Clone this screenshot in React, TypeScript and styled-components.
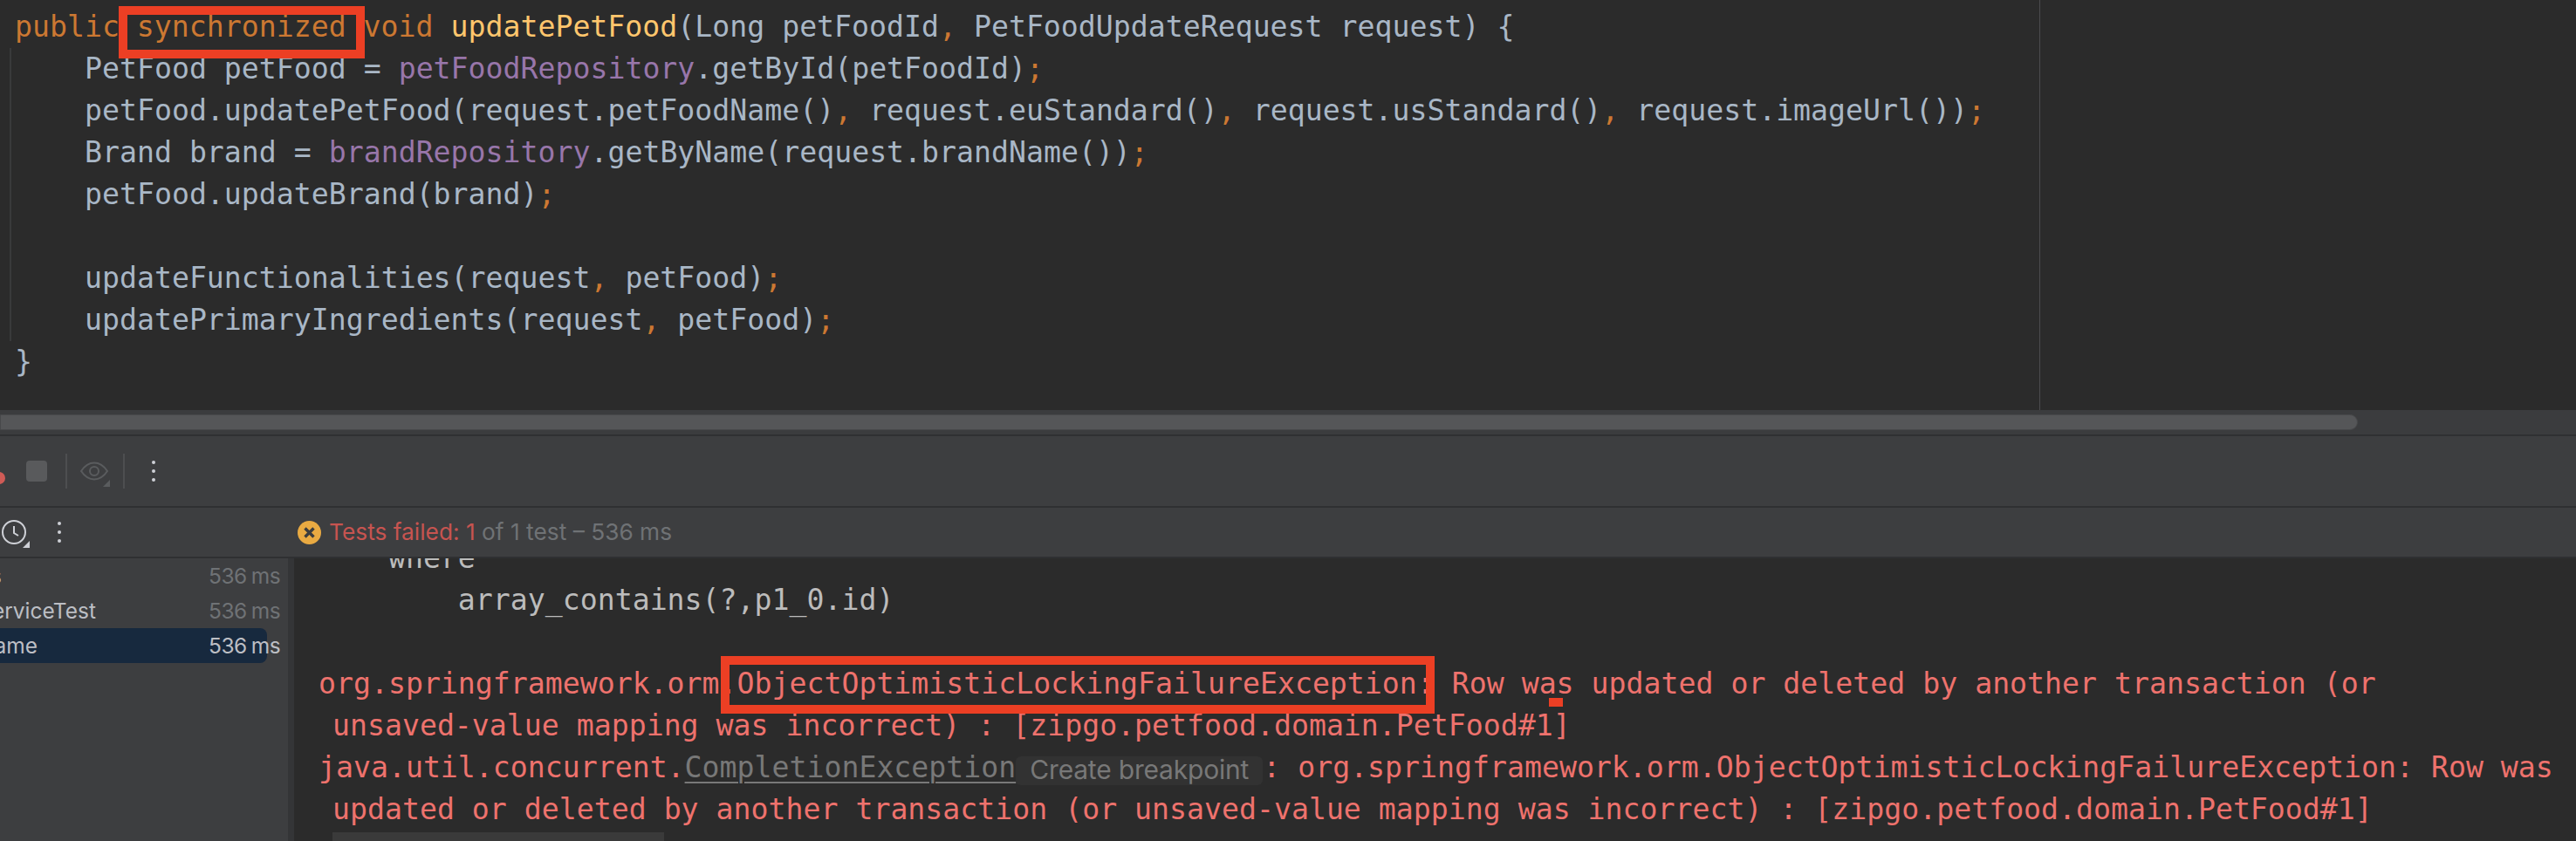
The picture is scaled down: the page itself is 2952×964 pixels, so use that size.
import React from "react";
import styled, { createGlobalStyle } from "styled-components";

const Global = createGlobalStyle`
  html, body { margin: 0; padding: 0; background: #2b2b2b; }
  * { box-sizing: border-box; }
`;

const mono = `"DejaVu Sans Mono", "Liberation Mono", monospace`;
const ui = `Inter, "Noto Sans", sans-serif`;

const Page = styled.div`
  position: relative;
  width: 2952px;
  height: 964px;
  overflow: hidden;
  display: flex;
  flex-direction: column;
  background: #2b2b2b;
`;

const Editor = styled.div`
  height: 470px;
  flex: none;
  display: flex;
  background: #2b2b2b;
`;
const CodeArea = styled.div`
  width: 2338px;
  padding: 7px 0 0 17px;
  border-right: 1px solid #4b4c4e;
  font: 33.2px/48px ${mono};
  color: #a9b7c6;
`;
const Line = styled.div`
  height: 48px;
  white-space: pre;
`;
const MethodBody = styled.div`
  margin-left: -6px;
  padding-left: 84px;
  border-left: 2px solid #393a3b;
`;
const Kw = styled.span`color: #cc7832;`;
const Fn = styled.span`color: #ffc66d;`;
const Field = styled.span`color: #9876aa;`;

const ScrollTrack = styled.div`
  height: 28px;
  flex: none;
  padding-top: 5px;
  background: #3b3c3e;
`;
const ScrollThumb = styled.div`
  width: 2702px;
  height: 18px;
  background: #555658;
  border: 1px solid #47484a;
  border-radius: 0 9px 9px 0;
`;
const Rule = styled.div`
  height: 2px;
  flex: none;
  background: #2f3032;
`;

const ActionBar = styled.div`
  position: relative;
  height: 80px;
  flex: none;
  display: flex;
  align-items: center;
  padding-left: 30px;
  background: #3d3e40;
`;
const RunDot = styled.span`
  position: absolute;
  left: -8px;
  top: 41px;
  width: 14px;
  height: 14px;
  border-radius: 50%;
  background: #cf5b56;
`;
const StopButton = styled.span`
  width: 24px;
  height: 24px;
  border-radius: 4px;
  background: #595a5c;
`;
const Sep = styled.span<{ $gap: number }>`
  width: 2px;
  height: 40px;
  margin-left: ${(p) => p.$gap}px;
  background: #4d4e50;
`;
const IconWrap = styled.span<{ $left: number; $w: number; $h: number }>`
  position: relative;
  display: block;
  flex: none;
  width: ${(p) => p.$w}px;
  height: ${(p) => p.$h}px;
  margin-left: ${(p) => p.$left}px;
  svg { display: block; }
`;
const Corner = styled.span<{ $color: string; $right: number; $bottom: number }>`
  position: absolute;
  right: ${(p) => p.$right}px;
  bottom: ${(p) => p.$bottom}px;
  width: 8px;
  height: 8px;
  background: ${(p) => p.$color};
  clip-path: polygon(100% 0, 100% 100%, 0 100%);
`;
const Kebab = styled.span<{ $left: number }>`
  display: flex;
  flex-direction: column;
  gap: 6px;
  margin-left: ${(p) => p.$left}px;
  i {
    display: block;
    width: 4px;
    height: 4px;
    border-radius: 50%;
    background: #ced0d6;
  }
`;

const StatusBar = styled.div`
  height: 56px;
  flex: none;
  display: flex;
  align-items: center;
  background: #3d3e40;
`;
const StatusTools = styled.div`
  width: 341px;
  flex: none;
  display: flex;
  align-items: center;
`;
const StatusText = styled.div`
  margin-left: 9px;
  font: 26.300px/32px ${ui};
  color: #6f7275;
  white-space: pre;
`;
const Failed = styled.span`color: #c75450;`;

const Main = styled.div`
  flex: 1;
  min-height: 0;
  display: flex;
`;
const Tree = styled.div`
  width: 330px;
  flex: none;
  background: #3d3e40;
  font: 24.500px/40px ${ui};
  color: #bcbec4;
`;
const TreeRow = styled.div<{ $selected?: boolean }>`
  position: relative;
  height: 40px;
  display: flex;
  justify-content: space-between;
  white-space: nowrap;
  padding-right: 9px;
  &::before {
    content: "";
    position: absolute;
    inset: 0 24px 0 0;
    border-radius: 0 8px 8px 0;
    background: ${(p) => (p.$selected ? "#17293e" : "transparent")};
  }
`;
const TreeLabel = styled.span<{ $w: number }>`
  position: relative;
  width: ${(p) => p.$w}px;
  display: flex;
  justify-content: flex-end;
  overflow: hidden;
`;
const Duration = styled.span<{ $selected?: boolean }>`
  position: relative;
  letter-spacing: -0.6px;
  word-spacing: -1px;
  color: ${(p) => (p.$selected ? "#bcbec4" : "#6f7275")};
`;
const Gutter = styled.div`
  width: 7px;
  flex: none;
  background: #343537;
`;

const Console = styled.div`
  flex: 1;
  min-width: 0;
  overflow: hidden;
  background: #2b2b2b;
  padding-left: 28px;
  font: 33.2px/48px ${mono};
  color: #ee726d;
`;
const ScrolledLog = styled.div`
  margin-top: -24px;
`;
const LogLine = styled.div<{ $wrapped?: boolean; $plain?: boolean }>`
  height: 48px;
  white-space: pre;
  padding-left: ${(p) => (p.$wrapped ? 16 : 0)}px;
  color: ${(p) => (p.$plain ? "#bcbcbc" : "inherit")};
`;
const ClassLink = styled.span`
  color: #787878;
  text-decoration: underline;
  text-decoration-thickness: 2px;
  text-underline-offset: 5px;
`;
const Inlay = styled.span`
  display: inline-block;
  width: 283px;
  height: 33px;
  vertical-align: -1.850px;
  text-align: center;
  font: 30px/30px ${ui};
  letter-spacing: -0.2px;
  color: #787878;
  background: #323232;
  border-radius: 6px;
`;
const Folded = styled.div`
  width: 380px;
  height: 48px;
  margin-top: 2px;
  line-height: 49px;
  background: #3a3a3a;
  color: #8a8a8a;
`;

const Callout = styled.div<{ $x: number; $y: number; $w: number; $h: number }>`
  position: absolute;
  left: ${(p) => p.$x}px;
  top: ${(p) => p.$y}px;
  width: ${(p) => p.$w}px;
  height: ${(p) => p.$h}px;
  border: 10px solid #ec3f24;
`;
const Marker = styled.div`
  position: absolute;
  left: 1775px;
  top: 800px;
  width: 16px;
  height: 10px;
  background: #ec3f24;
`;

const Eye = () => (
  <svg width="32" height="22" viewBox="0 0 32 22" fill="none" stroke="#5a5c5e" strokeWidth="2">
    <path d="M1 11C5 5 10 1.500 16 1.500S27 5 31 11C27 17 22 20.500 16 20.500S5 17 1 11Z" />
    <circle cx="16" cy="11" r="5" />
  </svg>
);
const Clock = () => (
  <svg width="28" height="28" viewBox="0 0 28 28" fill="none" stroke="#ced0d6" strokeWidth="2">
    <circle cx="14" cy="14" r="13" />
    <path d="M14 7v8l5 3" strokeWidth="2" />
  </svg>
);
const FailIcon = () => (
  <svg width="27" height="27" viewBox="0 0 27 27" fill="none">
    <circle cx="13.500" cy="13.500" r="13.500" fill="#e9aa42" />
    <path d="M8.500 8.500l10 10M18.500 8.500l-10 10" stroke="#3b3c3e" strokeWidth="3.400" />
  </svg>
);

const rows = [
  { label: "Tests", w: 2 },
  { label: "PetFoodServiceTest", w: 110 },
  { label: "updatePetFoodName", w: 43, selected: true },
];

export default function App() {
  return (
    <Page>
      <Global />
      <Editor>
        <CodeArea>
          <Line>
            <Kw>public synchronized void </Kw>
            <Fn>updatePetFood</Fn>(Long petFoodId<Kw>,</Kw> PetFoodUpdateRequest request) {"{"}
          </Line>
          <MethodBody>
            <Line>
              PetFood petFood = <Field>petFoodRepository</Field>.getById(petFoodId)<Kw>;</Kw>
            </Line>
            <Line>
              petFood.updatePetFood(request.petFoodName()<Kw>,</Kw> request.euStandard()<Kw>,</Kw> request.usStandard()
              <Kw>,</Kw> request.imageUrl())<Kw>;</Kw>
            </Line>
            <Line>
              Brand brand = <Field>brandRepository</Field>.getByName(request.brandName())<Kw>;</Kw>
            </Line>
            <Line>
              petFood.updateBrand(brand)<Kw>;</Kw>
            </Line>
            <Line />
            <Line>
              updateFunctionalities(request<Kw>,</Kw> petFood)<Kw>;</Kw>
            </Line>
            <Line>
              updatePrimaryIngredients(request<Kw>,</Kw> petFood)<Kw>;</Kw>
            </Line>
          </MethodBody>
          <Line>{"}"}</Line>
        </CodeArea>
      </Editor>

      <ScrollTrack>
        <ScrollThumb />
      </ScrollTrack>
      <Rule />

      <ActionBar>
        <RunDot />
        <StopButton />
        <Sep $gap={21} />
        <IconWrap $left={15} $w={32} $h={22}>
          <Eye />
          <Corner $color="#5a5c5e" $right={-2} $bottom={-7} />
        </IconWrap>
        <Sep $gap={17} />
        <Kebab $left={31}>
          <i />
          <i />
          <i />
        </Kebab>
      </ActionBar>
      <Rule />

      <StatusBar>
        <StatusTools>
          <IconWrap $left={2} $w={28} $h={28}>
            <Clock />
            <Corner $color="#ced0d6" $right={-4} $bottom={-4} />
          </IconWrap>
          <Kebab $left={36}>
            <i />
            <i />
            <i />
          </Kebab>
        </StatusTools>
        <FailIcon />
        <StatusText>
          <Failed>Tests failed: 1</Failed> of 1 test – 536 ms
        </StatusText>
      </StatusBar>
      <Rule />

      <Main>
        <Tree>
          {rows.map((r) => (
            <TreeRow key={r.label} $selected={r.selected}>
              <TreeLabel $w={r.w}>{r.label}</TreeLabel>
              <Duration $selected={r.selected}>536 ms</Duration>
            </TreeRow>
          ))}
        </Tree>
        <Gutter />
        <Console>
          <ScrolledLog>
            <LogLine $plain>{"    where"}</LogLine>
            <LogLine $plain>{"        array_contains(?,p1_0.id)"}</LogLine>
            <LogLine />
            <LogLine>
              org.springframework.orm.ObjectOptimisticLockingFailureException: Row was updated or deleted by another
              transaction (or
            </LogLine>
            <LogLine $wrapped>unsaved-value mapping was incorrect) : [zipgo.petfood.domain.PetFood#1]</LogLine>
            <LogLine>
              java.util.concurrent.<ClassLink>CompletionException</ClassLink>
              <Inlay>Create breakpoint</Inlay>: org.springframework.orm.ObjectOptimisticLockingFailureException: Row was
            </LogLine>
            <LogLine $wrapped>
              updated or deleted by another transaction (or unsaved-value mapping was incorrect) :
              [zipgo.petfood.domain.PetFood#1]
            </LogLine>
            <LogLine $wrapped>
              <Folded>{"<14 internal lines>"}</Folded>
            </LogLine>
          </ScrolledLog>
        </Console>
      </Main>

      <Callout $x={136} $y={7} $w={282} $h={60} />
      <Callout $x={826} $y={752} $w={818} $h={66} />
      <Marker />
    </Page>
  );
}
